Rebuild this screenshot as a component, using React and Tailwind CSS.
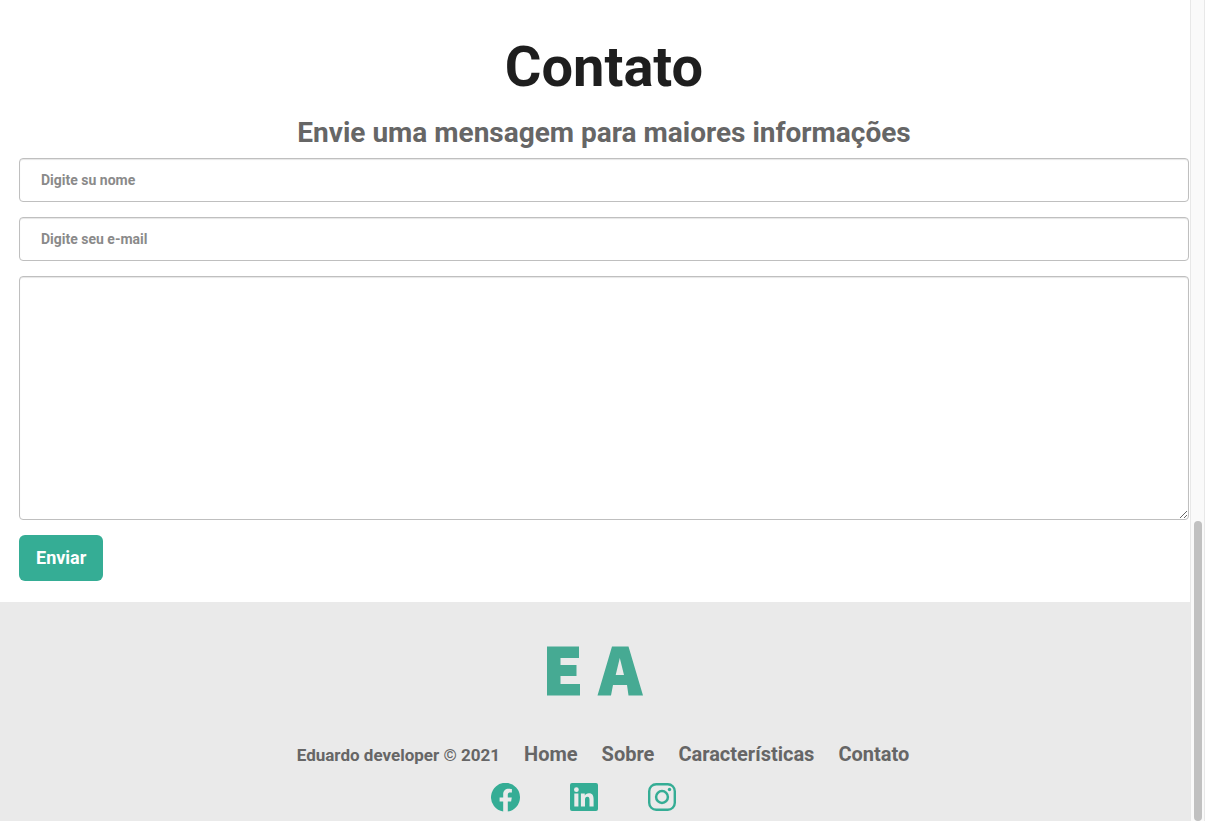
const links = ["Home", "Sobre", "Características", "Contato"];
const field =
  "block w-full rounded border border-[#bfbfbf] bg-white px-[21px] text-sm font-bold text-[#666] outline-none placeholder:text-[#8a8a8a] shadow-[inset_0_1px_1px_rgba(0,0,0,0.1)]";

function Facebook() {
  return (
    <svg viewBox="0 0 29 29" className="size-[29px]" fill="currentColor">
      <path d="M29 14.5A14.5 14.5 0 1 0 12.2 28.6V18.6H8.6V14.5H12.2V11.3C12.2 7.7 14.4 5.7 17.7 5.7C19.3 5.7 20.9 6 20.9 6V9.5H19.1C17.3 9.5 16.8 10.6 16.8 11.8V14.5H20.8L20.1 18.6H16.8V28.6A14.5 14.5 0 0 0 29 14.5Z" />
    </svg>
  );
}

function LinkedIn() {
  return (
    <svg viewBox="0 0 28 28" className="size-7" fill="currentColor">
      <path
        fillRule="evenodd"
        d="M2 0H26A2 2 0 0 1 28 2V26A2 2 0 0 1 26 28H2A2 2 0 0 1 0 26V2A2 2 0 0 1 2 0ZM4.3 10.6V23.4H8.4V10.6ZM6.4 4.3A2.4 2.4 0 1 0 6.4 9.1A2.4 2.4 0 1 0 6.4 4.3ZM10.9 10.6V23.4H15V17.1C15 15.4 15.3 13.8 17.4 13.8C19.4 13.8 19.5 15.7 19.5 17.2V23.4H23.6V16.4C23.6 12.9 22.8 10.3 18.8 10.3C16.8 10.3 15.5 11.4 14.9 12.4H14.8V10.6Z"
      />
    </svg>
  );
}

function Instagram() {
  return (
    <svg viewBox="0 0 28 28" className="size-7" fill="none" stroke="currentColor">
      <rect x="1.2" y="1.2" width="25.6" height="25.6" rx="7" strokeWidth="2.4" />
      <circle cx="14" cy="14" r="5.9" strokeWidth="2.5" />
      <circle cx="21.5" cy="6.5" r="1.7" fill="currentColor" stroke="none" />
    </svg>
  );
}

export default function App() {
  return (
    <div className="flex h-screen overflow-hidden bg-white font-['Roboto',sans-serif] font-bold text-[#666]">
      <div className="flex min-w-0 flex-1 flex-col">
        <main className="pt-[33px] pr-[1px] pb-[21px] pl-[19px]">
          <h1 className="text-center text-[56px] leading-[68px] text-[#1e1e1e]">Contato</h1>
          <h2 className="mt-4 text-center text-[28px] leading-8">Envie uma mensagem para maiores informações</h2>
          <form className="mt-[9px]" onSubmit={(e) => e.preventDefault()}>
            <input aria-label="Nome" type="text" placeholder="Digite su nome" className={field + " mb-[15px] h-11"} />
            <input aria-label="E-mail" type="email" placeholder="Digite seu e-mail" className={field + " mb-[15px] h-11"} />
            <textarea aria-label="Mensagem" className={field + " mb-[15px] h-[244px] resize-y py-3"} />
            <button type="submit" className="h-[46px] rounded-md bg-[#35ad95] px-[17px] text-lg font-bold text-white">
              Enviar
            </button>
          </form>
        </main>
        <footer className="flex flex-1 flex-col items-center bg-[#eaeaea] pt-11">
          <svg viewBox="0 0 96 50" className="h-[50px] w-24" fill="#46aa93" role="img" aria-label="EA">
            <path d="M0 .5H32V12H13.5V19H29.5V30H13.5V38H33V49.5H0Z" />
            <path fillRule="evenodd" d="M65 .5H81.5L96 49.5H81.5L80 39H66L64 49.5H50.5ZM72.8 12L68.7 29H77Z" />
          </svg>
          <nav className="mt-11 flex items-baseline gap-6 pl-4 text-xl leading-7">
            <span className="text-[17px]">Eduardo developer © 2021</span>
            {links.map((l) => (
              <a key={l} href="#">{l}</a>
            ))}
          </nav>
          <div className="mt-[14px] mr-6 flex items-start gap-[50px] text-[#35ad95]">
            <a href="#" aria-label="Facebook"><Facebook /></a>
            <a href="#" aria-label="LinkedIn"><LinkedIn /></a>
            <a href="#" aria-label="Instagram"><Instagram /></a>
          </div>
        </footer>
      </div>
      <div className="flex w-[15px] flex-col items-center justify-end border-x border-[#e8e8e8] bg-[#fafafa]">
        <div className="h-[300px] w-2 rounded-full bg-[#c1c1c1]" />
      </div>
    </div>
  );
}
